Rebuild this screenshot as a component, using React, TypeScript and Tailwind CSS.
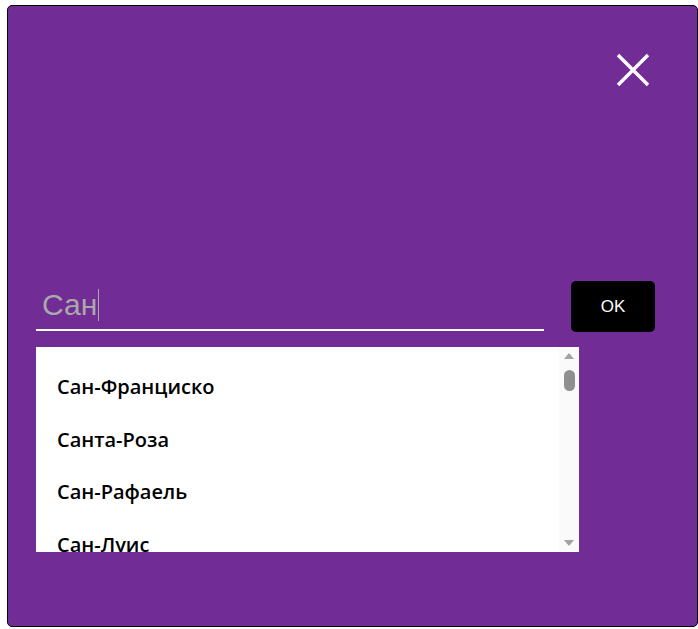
import React from 'react';

const cities = ['Сан-Франциско', 'Санта-Роза', 'Сан-Рафаель', 'Сан-Луис'];

const App = () => {
  return (
    <div className="w-[698px] h-[629px] pt-[5px] pl-[7px]">
      <div className="relative w-[691px] h-[622px] bg-[#722c96] border border-black rounded-[5px]">
        <button className="absolute top-[44px] right-[44px] w-[40px] h-[40px] flex items-center justify-center">
          <svg width="34" height="34" viewBox="0 0 34 34">
            <path d="M2 2 L32 32 M32 2 L2 32" stroke="#fff" strokeWidth="3.4" fill="none" />
          </svg>
        </button>

        <div className="flex items-start pt-[275px] pl-[28px]">
          <div className="w-[508px] h-[50px] border-b-2 border-white flex items-center pl-[6px]">
            <span className="text-[30px] text-[#a9a9a9] font-['Liberation_Sans',Arial,sans-serif] leading-none">Сан</span>
            <span className="w-px h-[32px] bg-[#a9a9a9] ml-px" />
          </div>
          <button className="ml-[27px] w-[84px] h-[51px] bg-black rounded-[5px] text-white text-[17px] font-['Liberation_Sans',Arial,sans-serif]">
            OK
          </button>
        </div>

        <div className="ml-[28px] mt-[15px] w-[543px] h-[205px] bg-white flex">
          <ul className="flex-1 overflow-hidden py-[14px]">
            {cities.map((c) => (
              <li
                key={c}
                className="h-[52.5px] flex items-center pl-[21px] text-[20px] font-semibold text-black font-['Open_Sans','Noto_Sans',sans-serif]"
              >
                {c}
              </li>
            ))}
          </ul>
          <div className="w-[20px] bg-[#fafafa] flex flex-col items-center pt-[6px] pb-[6px]">
            <svg width="10" height="6" viewBox="0 0 10 6">
              <path d="M0 6 L5 0 L10 6 Z" fill="#a3a3a3" />
            </svg>
            <div className="mt-[11px] w-[11px] h-[21px] rounded-full bg-[#8f8f8f]" />
            <div className="flex-1" />
            <svg width="10" height="6" viewBox="0 0 10 6">
              <path d="M0 0 L10 0 L5 6 Z" fill="#a3a3a3" />
            </svg>
          </div>
        </div>
      </div>
    </div>
  );
};

export default App;
